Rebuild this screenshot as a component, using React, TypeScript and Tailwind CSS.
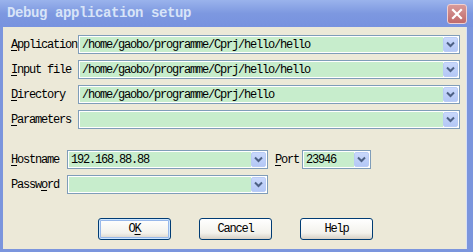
import React from "react";

const mono = { fontFamily: '"Liberation Mono", "DejaVu Sans Mono", monospace' };

function Chevron() {
  return (
    <svg width="9" height="7" viewBox="0 0 9 7">
      <path d="M1 1.5 L4.5 5 L8 1.5" stroke="#4d6185" strokeWidth="2" fill="none" />
    </svg>
  );
}

function Combo({ value, width }: { value: string; width: string }) {
  return (
    <div className={`flex h-[19px] ${width} border border-[#7f9db9] bg-white p-px`}>
      <div className="flex flex-1 items-center overflow-hidden bg-[#c7edcc] pl-[2px] text-[12px] tracking-[-1.2px] text-black whitespace-nowrap leading-none" style={mono}>
        {value}
      </div>
      <div className="flex w-[15px] items-center justify-center rounded-[2px] bg-[linear-gradient(#c9d8fb,#b4c8f6)] border border-[#b9ccf5]">
        <Chevron />
      </div>
    </div>
  );
}

function Label({ text, u, width }: { text: string; u: number; width: string }) {
  return (
    <div className={`${width} text-[12px] tracking-[-1.2px] text-black leading-none whitespace-pre`} style={mono}>
      {text.slice(0, u)}
      <span className="underline underline-offset-2">{text[u]}</span>
      {text.slice(u + 1)}
    </div>
  );
}

function Btn({ children, def }: { children: React.ReactNode; def?: boolean }) {
  return (
    <div className={`flex h-[22px] w-[73px] items-center justify-center rounded-[3px] border border-[#003c74] bg-[linear-gradient(#ffffff,#f3f2ec_70%,#d6d0c5)] text-[12px] tracking-[-1.2px] text-black ${def ? "shadow-[inset_0_0_0_1px_#cee7ff,inset_0_0_0_2px_#98b8ea]" : ""}`} style={mono}>
      {children}
    </div>
  );
}

export default function App() {
  return (
    <div className="w-[473px] h-[252px] bg-[#7b95dd] flex flex-col">
      <div className="h-[27px] flex items-center justify-between bg-[linear-gradient(#9ab3ec,#7d98e0_50%,#7792df)] pl-[7px] pr-[6px]">
        <span className="text-[14px] font-bold tracking-[-0.4px] text-[#d8e4f8]" style={mono}>
          Debug application setup
        </span>
        <div className="w-[20px] h-[20px] rounded-[3px] border border-[#f0d0d0] bg-[linear-gradient(#d89a9a,#c06a6a)] flex items-center justify-center">
          <svg width="12" height="12" viewBox="0 0 12 12">
            <path d="M2 2 L10 10 M10 2 L2 10" stroke="white" strokeWidth="2.2" strokeLinecap="square" />
          </svg>
        </div>
      </div>
      <div className="flex-1 flex pl-[3px] pr-[6px] pb-[3px]">
        <div className="flex-1 bg-[#ece9d8] flex flex-col pt-[8px] pl-[8px] border-r border-[#d9e1f5]">
          <div className="flex flex-col gap-[6px]">
            <div className="flex items-center">
              <Label text="Application" u={0} width="w-[67px]" />
              <Combo value="/home/gaobo/programme/Cprj/hello/hello" width="w-[382px]" />
            </div>
            <div className="flex items-center">
              <Label text="Input file" u={0} width="w-[67px]" />
              <Combo value="/home/gaobo/programme/Cprj/hello/hello" width="w-[382px]" />
            </div>
            <div className="flex items-center">
              <Label text="Directory" u={0} width="w-[67px]" />
              <Combo value="/home/gaobo/programme/Cprj/hello" width="w-[382px]" />
            </div>
            <div className="flex items-center">
              <Label text="Parameters" u={0} width="w-[67px]" />
              <Combo value="" width="w-[382px]" />
            </div>
          </div>
          <div className="flex flex-col gap-[6px] mt-[21px]">
            <div className="flex items-center">
              <Label text="Hostname" u={0} width="w-[56px]" />
              <Combo value="192.168.88.88" width="w-[201px]" />
              <div className="ml-[7px] w-[27px]">
                <Label text="Port" u={0} width="w-[27px]" />
              </div>
              <Combo value="23946" width="w-[69px]" />
            </div>
            <div className="flex items-center">
              <Label text="Password" u={5} width="w-[56px]" />
              <Combo value="" width="w-[201px]" />
            </div>
          </div>
          <div className="flex gap-[28px] mt-[24px] ml-[87px]">
            <Btn def>
              O<span className="underline underline-offset-2">K</span>
            </Btn>
            <Btn>Cancel</Btn>
            <Btn>Help</Btn>
          </div>
        </div>
      </div>
    </div>
  );
}
